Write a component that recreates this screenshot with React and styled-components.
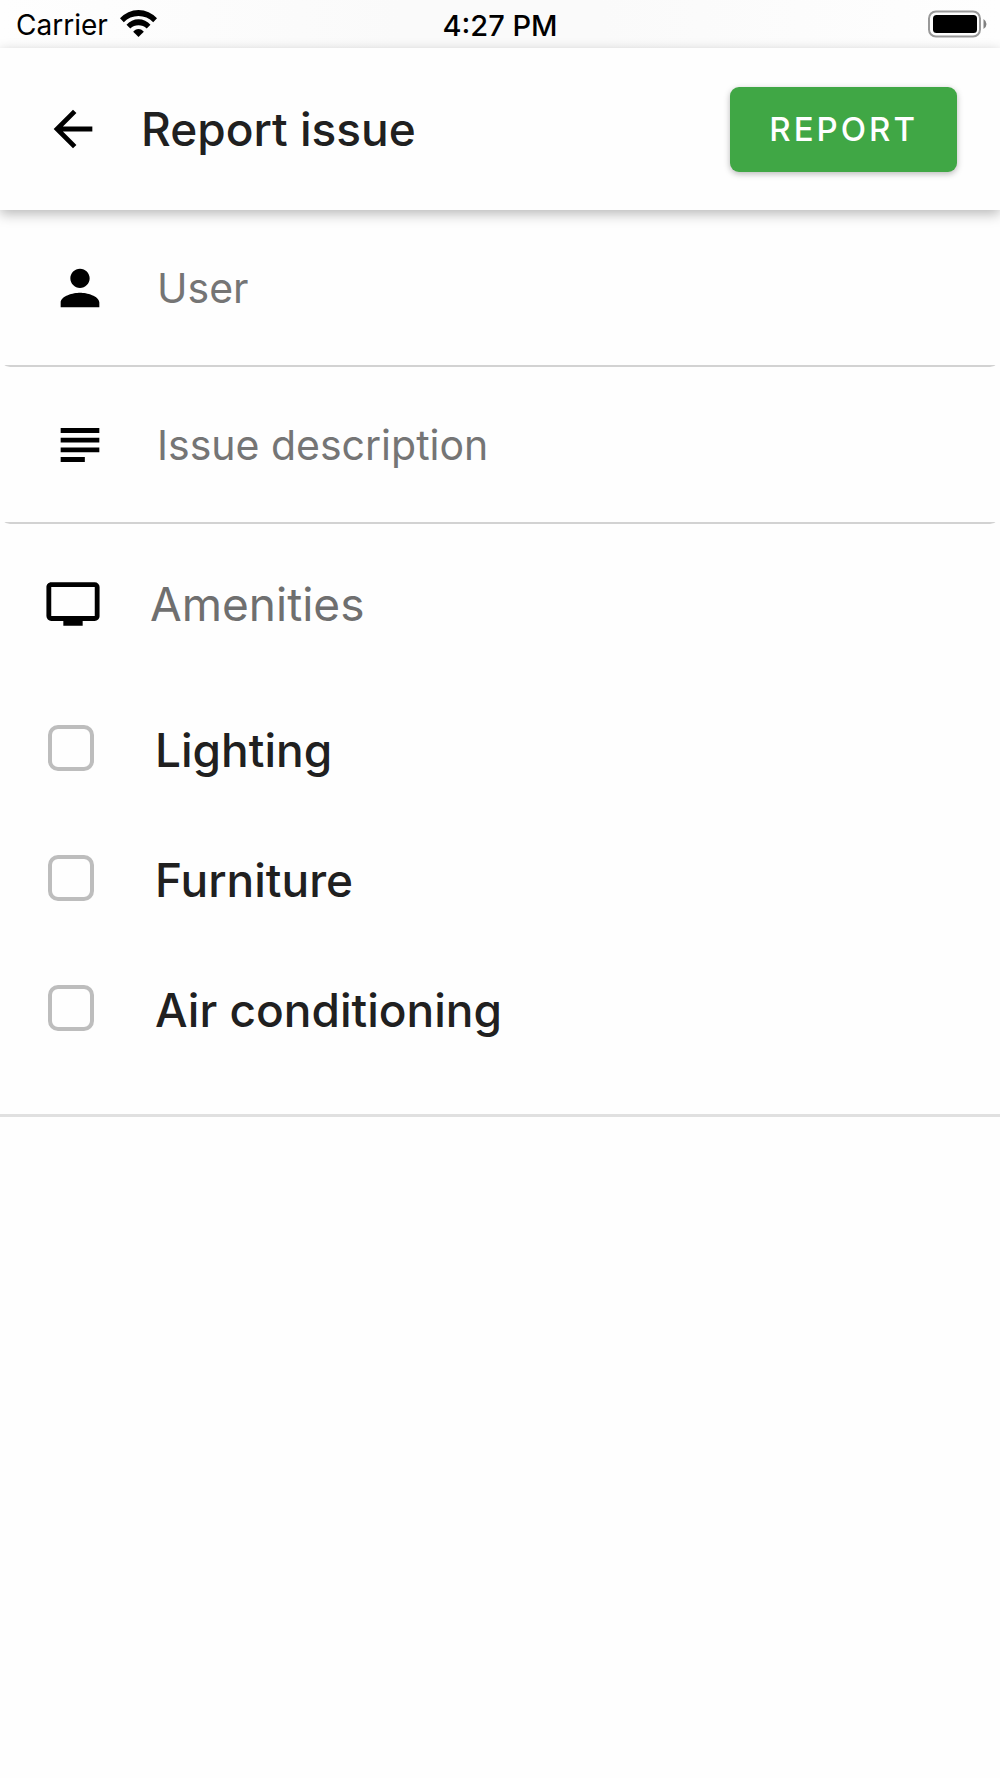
import React, { useState } from "react";
import styled, { createGlobalStyle } from "styled-components";
import {
  MdArrowBack,
  MdPerson,
  MdSubject,
  MdPersonalVideo,
} from "react-icons/md";

const GlobalStyle = createGlobalStyle`
  * {
    box-sizing: border-box;
  }
  body {
    margin: 0;
    background-color: #fefefe;
    color: #202020;
    font-family: Inter, "Liberation Sans", sans-serif;
  }
`;

const Container = styled.div`
  min-height: 100vh;
`;

const StatusBar = styled.div`
  display: grid;
  grid-template-columns: 1fr auto 1fr;
  align-items: center;
  height: 48px;
  padding: 0px 13px;
  color: black;
  background: linear-gradient(90deg, #fefefe, #fafafa 40%, #fafafa 60%, #fefefe);
`;
const Network = styled.div`
  display: flex;
  align-items: center;
  gap: 12px;
  padding-left: 3px;
`;
const StatusText = styled.span`
  padding-top: 2px;
  font-size: ${(props) => (props.$strong ? "29px" : "28px")};
  font-weight: ${(props) => (props.$strong ? 500 : 400)};
`;
const Battery = styled.svg`
  justify-self: end;
`;

const Header = styled.header`
  position: relative;
  display: flex;
  align-items: center;
  height: 162px;
  padding: 0px 43px 0px 44px;
  background-color: #fefefe;
  box-shadow: 0px 4px 12px rgba(0, 0, 0, 0.28);
`;
const BackLink = styled.a`
  display: flex;
  color: black;
  font-size: 58px;
`;
const Title = styled.h1`
  flex: 1;
  margin: 0px 0px 0px 39px;
  font-size: 46px;
  font-weight: 500;
`;
const Button = styled.button`
  height: 85px;
  padding: 0px 39px;
  border: none;
  border-radius: 9px;
  background-color: #40a745;
  box-shadow: 0px 2px 6px rgba(0, 0, 0, 0.28);
  color: white;
  font-family: inherit;
  font-size: 33px;
  font-weight: 450;
  letter-spacing: 3px;
  cursor: pointer;
`;

const Field = styled.div`
  display: flex;
  align-items: center;
  height: 157px;
  padding: 0px 51px 2px;
  border-radius: 0px 0px 10px 10px;
  background: linear-gradient(#d2d2d2, #d2d2d2) bottom / 100% 2px no-repeat;
`;
const FieldLabel = styled.label`
  display: flex;
  color: black;
  font-size: 58px;
`;
const Input = styled.input`
  flex: 1;
  min-width: 0;
  margin-left: 48px;
  padding: 0px;
  border: none;
  outline: none;
  background: transparent;
  color: #202020;
  font-family: inherit;
  font-size: 41px;
  &::placeholder {
    color: #757575;
    opacity: 1;
  }
`;

const Amenities = styled.fieldset`
  margin: 0px;
  padding: 0px 44px 41px;
  border: none;
  border-bottom: 3px solid #e0e0e0;
`;
const Legend = styled.legend`
  display: flex;
  align-items: center;
  width: 100%;
  height: 159px;
  padding: 0px;
  color: #6f6f6f;
  font-size: 46px;
  svg {
    color: black;
    font-size: 58px;
    margin-right: 48px;
  }
`;
const Option = styled.div`
  display: flex;
  align-items: center;
  height: 130px;
`;
const Checkbox = styled.input`
  appearance: none;
  width: 46px;
  height: 46px;
  margin: 0px 61px 0px 4px;
  border: 4px solid #bdbdbd;
  border-radius: 10px;
  cursor: pointer;
  &:checked {
    border-color: #40a745;
    background-color: #40a745;
  }
`;
const OptionLabel = styled.label`
  padding-top: 4px;
  font-size: 46px;
  font-weight: 500;
`;

const amenities = ["Lighting", "Furniture", "Air conditioning"];

const App = () => {
  const [selected, setSelected] = useState([]);

  const toggle = (name) => {
    setSelected((prev) =>
      prev.includes(name) ? prev.filter((n) => n !== name) : [...prev, name]
    );
  };

  return (
    <Container>
      <GlobalStyle />
      <StatusBar>
        <Network>
          <StatusText>Carrier</StatusText>
          <svg width="37" height="28" viewBox="0 0 37 28">
            <path d="M0 8.3A24.8 24.8 0 0 1 37 8.3L33.2 12.2A20.5 20.5 0 0 0 3.8 12.2Z" />
            <path d="M6.5 14.8A15.8 15.8 0 0 1 30.5 14.8L26.7 18.6A11.8 11.8 0 0 0 10.3 18.6Z" />
            <path d="M13.2 21.7A6.4 6.4 0 0 1 23.8 21.7L18.5 27Z" />
          </svg>
        </Network>
        <StatusText $strong>4:27 PM</StatusText>
        <Battery width="60" height="28" viewBox="0 0 60 28">
          <rect x="2" y="1.5" width="51" height="25" rx="7" fill="none" stroke="#999" strokeWidth="2" />
          <rect x="6" y="5" width="44" height="18" rx="3.5" />
          <path d="M56.5 9Q59.5 11 59.5 14T56.5 19Z" fill="#808080" />
        </Battery>
      </StatusBar>
      <Header>
        <BackLink href="#back" aria-label="Back">
          <MdArrowBack />
        </BackLink>
        <Title>Report issue</Title>
        <Button type="button">REPORT</Button>
      </Header>
      <Field>
        <FieldLabel htmlFor="user" aria-label="User">
          <MdPerson />
        </FieldLabel>
        <Input id="user" type="text" placeholder="User" />
      </Field>
      <Field>
        <FieldLabel htmlFor="description" aria-label="Issue description">
          <MdSubject />
        </FieldLabel>
        <Input id="description" type="text" placeholder="Issue description" />
      </Field>
      <Amenities>
        <Legend>
          <MdPersonalVideo />
          Amenities
        </Legend>
        {amenities.map((name) => (
          <Option key={name}>
            <Checkbox
              type="checkbox"
              id={name}
              checked={selected.includes(name)}
              onChange={() => toggle(name)}
            />
            <OptionLabel htmlFor={name}>{name}</OptionLabel>
          </Option>
        ))}
      </Amenities>
    </Container>
  );
};

export default App;
